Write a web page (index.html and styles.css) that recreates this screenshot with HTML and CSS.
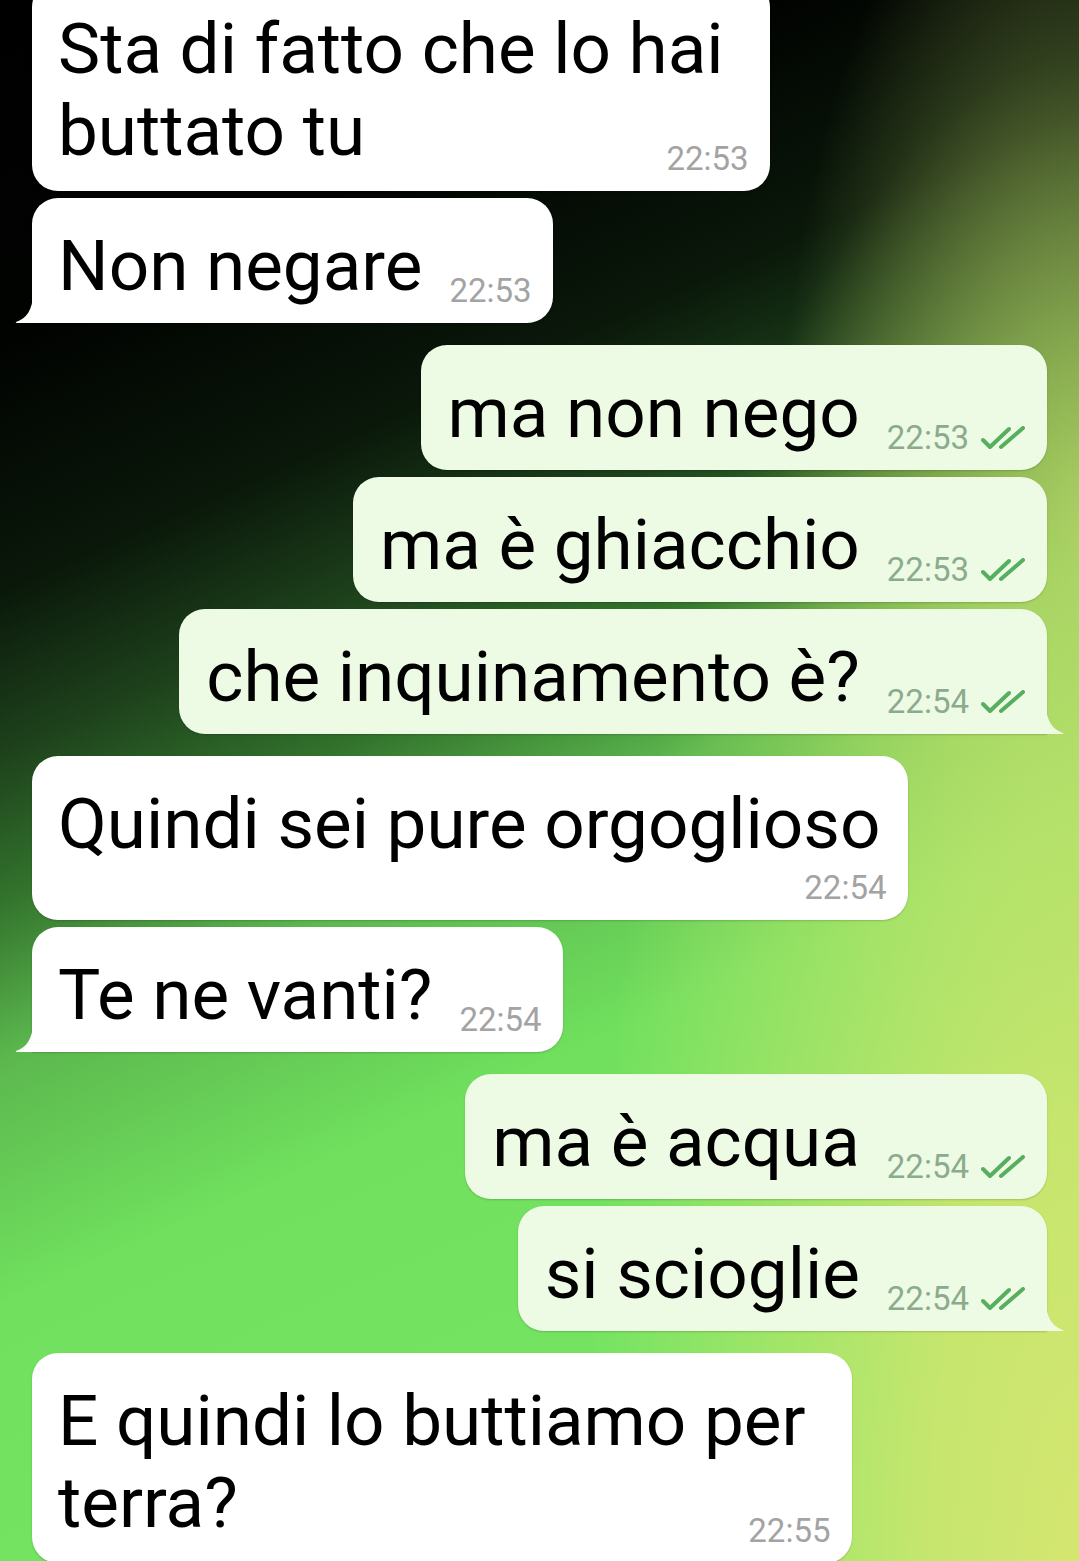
FILE: index.html
```html
<!DOCTYPE html>
<html lang="it">
  <head>
    <meta charset="utf-8" />
    <title>Chat</title>
    <link rel="stylesheet" href="styles.css">
  </head>
  <body>
    <div class="chat">
      <div class="group in">
        <div class="bubble stacked overlap">
          <div class="text">Sta di fatto che lo hai<br>buttato tu</div>
          <div class="meta"><span class="time">22:53</span></div>
        </div>
        <div class="bubble tail">
          <div class="text">Non negare</div>
          <div class="meta"><span class="time">22:53</span></div>
          <svg class="tail-shape" viewBox="0 0 18 30" width="18" height="30"><path d="M18 0 C18 17 11 26 1 29 Q0 30 2 30 L18 30 Z"/></svg>
        </div>
      </div>

      <div class="group out">
        <div class="bubble">
          <div class="text">ma non nego</div>
          <div class="meta"><span class="time">22:53</span><svg class="ticks" viewBox="0 0 46 24" width="46" height="24"><path d="M2 14 L9 21 L28 3 M20 21 L42 2"/></svg></div>
        </div>
        <div class="bubble">
          <div class="text">ma è ghiacchio</div>
          <div class="meta"><span class="time">22:53</span><svg class="ticks" viewBox="0 0 46 24" width="46" height="24"><path d="M2 14 L9 21 L28 3 M20 21 L42 2"/></svg></div>
        </div>
        <div class="bubble tail">
          <div class="text">che inquinamento è?</div>
          <div class="meta"><span class="time">22:54</span><svg class="ticks" viewBox="0 0 46 24" width="46" height="24"><path d="M2 14 L9 21 L28 3 M20 21 L42 2"/></svg></div>
          <svg class="tail-shape" viewBox="0 0 18 30" width="18" height="30"><path d="M0 0 C0 17 7 26 17 29 Q18 30 16 30 L0 30 Z"/></svg>
        </div>
      </div>

      <div class="group in">
        <div class="bubble stacked">
          <div class="text">Quindi sei pure orgoglioso</div>
          <div class="meta"><span class="time">22:54</span></div>
        </div>
        <div class="bubble tail">
          <div class="text">Te ne vanti?</div>
          <div class="meta"><span class="time">22:54</span></div>
          <svg class="tail-shape" viewBox="0 0 18 30" width="18" height="30"><path d="M18 0 C18 17 11 26 1 29 Q0 30 2 30 L18 30 Z"/></svg>
        </div>
      </div>

      <div class="group out">
        <div class="bubble">
          <div class="text">ma è acqua</div>
          <div class="meta"><span class="time">22:54</span><svg class="ticks" viewBox="0 0 46 24" width="46" height="24"><path d="M2 14 L9 21 L28 3 M20 21 L42 2"/></svg></div>
        </div>
        <div class="bubble tail">
          <div class="text">si scioglie</div>
          <div class="meta"><span class="time">22:54</span><svg class="ticks" viewBox="0 0 46 24" width="46" height="24"><path d="M2 14 L9 21 L28 3 M20 21 L42 2"/></svg></div>
          <svg class="tail-shape" viewBox="0 0 18 30" width="18" height="30"><path d="M0 0 C0 17 7 26 17 29 Q18 30 16 30 L0 30 Z"/></svg>
        </div>
      </div>

      <div class="group in">
        <div class="bubble stacked overlap">
          <div class="text">E quindi lo buttiamo per<br>terra?</div>
          <div class="meta"><span class="time">22:55</span></div>
        </div>
      </div>
    </div>
  </body>
</html>
```

FILE: styles.css
```css
html,
body {
  margin: 0;
  height: 1561px;
  overflow: hidden;
}
body {
  font-family: Roboto, "Noto Sans", sans-serif;
  background:
    radial-gradient(ellipse 300px 700px at 100% 500px, rgba(196, 222, 108, 0.6) 0%, rgba(196, 222, 108, 0) 100%),
    radial-gradient(ellipse 500px 1500px at 100% 100%, rgba(212, 230, 112, 1) 0%, rgba(212, 230, 112, 0.85) 30%, rgba(212, 230, 112, 0) 100%),
    linear-gradient(156deg, #000 0%, #010301 17%, #0a180a 29%, #1e421c 37%, #32722c 44%, #5cb84e 52%, #70e05e 64%, #78e866 100%);
}
.chat {
  display: flex;
  flex-direction: column;
  gap: 22px;
  margin-top: -19px;
}
.group {
  display: flex;
  flex-direction: column;
  gap: 7px;
}
.group.in {
  align-items: flex-start;
  padding-left: 32px;
}
.group.out {
  align-items: flex-end;
  padding-right: 32px;
}
.bubble {
  position: relative;
  display: flex;
  align-items: flex-end;
  padding: 27px 27px 13px 26px;
  border-radius: 26px;
  background: #fff;
  box-shadow: 0 1px 2px rgba(0, 0, 0, 0.18);
}
.out .bubble {
  background: #eefbe4;
  padding-left: 27px;
}
.text {
  font-size: 71px;
  line-height: 82px;
  color: #000;
  white-space: nowrap;
  margin-bottom: 3px;
}
.meta {
  display: flex;
  align-items: center;
  gap: 12px;
  margin-left: 27px;
  margin-right: -6px;
  font-size: 33px;
  line-height: 39px;
  color: #a3a3a3;
}
.out .meta {
  color: #8cab8e;
  margin-right: -7px;
}
.ticks {
  fill: none;
  stroke: #56ae5e;
  stroke-width: 4;
  stroke-linecap: round;
  stroke-linejoin: round;
}
.stacked {
  flex-direction: column;
  align-items: stretch;
}
.stacked .text {
  margin-bottom: 0;
}
.stacked .meta {
  align-self: flex-end;
  margin-top: 3px;
}
.stacked.overlap {
  padding-right: 46px;
}
.stacked.overlap .meta {
  margin-top: -33px;
  margin-right: -25px;
}
.in .tail {
  border-bottom-left-radius: 0;
}
.out .tail {
  border-bottom-right-radius: 0;
}
.tail-shape {
  position: absolute;
  bottom: 0;
}
.in .tail-shape {
  left: -17px;
  fill: #fff;
}
.out .tail-shape {
  right: -17px;
  fill: #eefbe4;
}
```
